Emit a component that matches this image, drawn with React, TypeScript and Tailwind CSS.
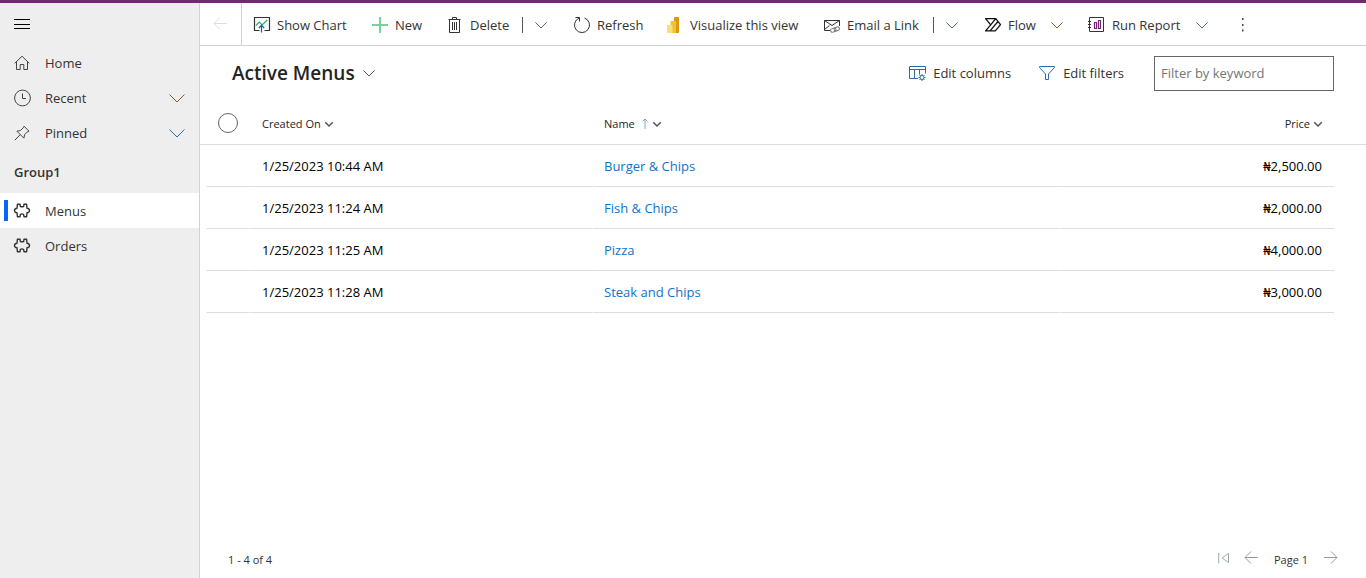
import type { ReactNode } from "react";

type IconProps = { children: ReactNode; className?: string; color?: string; width?: number };

function Icon({ children, className = "size-4", color = "#333333", width = 1 }: IconProps) {
  return (
    <svg
      viewBox="0 0 16 16"
      className={`shrink-0 overflow-visible ${className}`}
      fill="none"
      stroke={color}
      strokeWidth={width}
      aria-hidden="true"
    >
      {children}
    </svg>
  );
}

function Chevron({ className = "size-3", color = "#555555", width = 1 }: { className?: string; color?: string; width?: number }) {
  return (
    <Icon className={className} color={color} width={width}>
      <path d="M0.5 4.5 8 12l7.5-7.5" vectorEffect="non-scaling-stroke" />
    </Icon>
  );
}

function ArrowLeft({ color }: { color: string }) {
  return (
    <Icon className="size-4" color={color}>
      <path d="M14 7.500H1M7 1.500l-6 6 6 6" />
    </Icon>
  );
}

const HomeIcon = () => (
  <Icon color="#444444">
    <path d="M.7 8.3 8 1.2l7.3 7.1M2.5 7v7.5h3.7v-5h3.6v5h3.7V7" />
  </Icon>
);

const RecentIcon = () => (
  <Icon className="size-4" color="#444444">
    <circle cx="8.500" cy="8" r="7.900" />
    <path d="M8.500 3.500v5H12" />
  </Icon>
);

const PinIcon = () => (
  <Icon color="#444444">
    <path d="M10 1.2 15 6.2 13.4 6.8 10.6 9.6 9.9 13.2 2.9 6.2 6.5 5.5 9.4 2.6ZM6.2 9.7.8 15.2" />
  </Icon>
);

const PuzzleIcon = () => (
  <Icon color="#333333" width={1.400}>
    <path
      strokeLinejoin="round"
      d="M3.400 1.200H6L6.300 3.300Q8 4.300 9.700 3.300L10 1.200h2.600l.4 4q2.500.2 2.500 2.300T13 9.800l-.4 3.900H10l-.4-2.200Q8 10.300 6.400 11.500L6 13.700H3.400L3 9.800Q.5 9.600.5 7.500T3 5.200Z"
    />
  </Icon>
);

const ShowChartIcon = () => (
  <Icon width={1.200}>
    <path d="M5.500 13.500H.5v-13h15v13h-5" />
    <path stroke="#2fae5a" d="m2 8.500 3.200-3.500 3 3 5-5" />
    <path stroke="#1160b7" width="2" d="M7.500 15.500V8.500M4.800 11l2.700-2.700 2.700 2.700" />
  </Icon>
);

const PlusIcon = () => (
  <Icon color="#7fcf9b" width={2}>
    <path d="M8 0v16M0 8h16" />
  </Icon>
);

const TrashIcon = () => (
  <Icon>
    <path d="M1.500 2.500h12M5.500 2.500v-2h4v2M2.500 2.500v13h10v-13M5.500 5v8M7.500 5v8M9.500 5v8" />
  </Icon>
);

const RefreshIcon = () => (
  <Icon>
    <path d="M5.200 1.100A7.500 7.500 0 1 0 10.500 1M1.500.5h4v4" />
  </Icon>
);

const PowerBiIcon = () => (
  <Icon color="none">
    <rect x="7" y="0" width="5" height="16" rx=".7" fill="#d99a12" />
    <rect x="3.500" y="4" width="5.500" height="12" rx=".7" fill="#efc334" />
    <rect x="0" y="8" width="5.500" height="8" rx=".7" fill="#f7df7a" />
  </Icon>
);

const EmailIcon = () => (
  <Icon>
    <path d="M6 13.500H.5v-10h15V9M.5 3.500 8 8.500l7.500-5M.5 12.500l5-4" />
    <g stroke="#777777">
      <rect x="6.500" y="11.500" width="5.500" height="3.500" rx="1.700" transform="rotate(-20 9 13)" />
      <rect x="10" y="10.300" width="5.500" height="3.500" rx="1.700" transform="rotate(-20 12.500 12)" />
    </g>
  </Icon>
);

const FlowIcon = () => (
  <Icon color="#111111" width={1.300}>
    <path strokeLinejoin="round" d="M.6 1.600h10.200l4.700 6-5.200 6.300H.6L5.700 7.800ZM5.700 7.800l4.800-6M5 13.800 13 4.500" />
  </Icon>
);

const ReportIcon = () => (
  <Icon>
    <path d="M.5.5h14v14h-14Z" />
    <path d="M-1 4.500h3M-1 7.500h3M-1 10.500h3" />
    <path stroke="#742774" strokeWidth="1.200" d="M5.500 5.500h2v6h-2ZM9.500 3.500h2v8h-2Z" />
  </Icon>
);

const ColumnsIcon = () => (
  <Icon color="#2b6cab">
    <path d="M9 13.500H.5v-12h16v7M.5 4.500h16M5.500 4.500v9M10.500 4.500v5" />
    <circle cx="13" cy="12.500" r="2" />
    <path d="M13 9v1.500M13 14.500V16M9.500 12.500H11M15 12.500h1.500M10.500 10l1 1M14.500 14l1 1M15.500 10l-1 1M11.500 14l-1 1" />
  </Icon>
);

const FilterIcon = () => (
  <Icon color="#2b6cab">
    <path d="M.5 1.500h15v1L9.500 9v5.500h-3V9L.5 2.500Z" />
  </Icon>
);

const navItems = [
  { label: "Home", icon: <HomeIcon /> },
  { label: "Recent", icon: <RecentIcon />, chevron: "#8a5a1e" },
  { label: "Pinned", icon: <PinIcon />, chevron: "#2f6f9f" },
];

const groupItems = [
  { label: "Menus", active: true },
  { label: "Orders", active: false },
];

const commands = [
  { label: "Show Chart", icon: <ShowChartIcon />, width: "w-[118px]" },
  { label: "New", icon: <PlusIcon />, width: "w-[75px]" },
  { label: "Delete", icon: <TrashIcon />, width: "w-[69px]", split: true, menu: "w-[52px]", tone: "#6b5a6b" },
  { label: "Refresh", icon: <RefreshIcon />, width: "w-[93px]" },
  { label: "Visualize this view", icon: <PowerBiIcon />, width: "w-[157px]" },
  { label: "Email a Link", icon: <EmailIcon />, width: "w-[103px]", split: true, menu: "w-[52px]", tone: "#3f6f6a" },
  { label: "Flow", icon: <FlowIcon />, width: "w-[54px]", menu: "w-[50px]", tone: "#8a5a1e" },
  { label: "Run Report", icon: <ReportIcon />, width: "w-[95px]", menu: "w-[51px]", tone: "#4f7a5f" },
];

const rows = [
  { created: "1/25/2023 10:44 AM", name: "Burger & Chips", price: "₦2,500.00" },
  { created: "1/25/2023 11:24 AM", name: "Fish & Chips", price: "₦2,000.00" },
  { created: "1/25/2023 11:25 AM", name: "Pizza", price: "₦4,000.00" },
  { created: "1/25/2023 11:28 AM", name: "Steak and Chips", price: "₦3,000.00" },
];

function Sidebar() {
  return (
    <nav className="flex w-[200px] shrink-0 flex-col border-r border-[#d2d2d2] bg-[#eeeeee]">
      <button type="button" aria-label="Site map" className="flex h-[42px] items-center px-3.5">
        <Icon color="#000000">
          <path d="M0 3.500h16M0 8.500h16M0 12.500h16" />
        </Icon>
      </button>
      {navItems.map((item) => (
        <button key={item.label} type="button" className="flex h-[35px] items-center gap-[15px] px-3.5 text-left">
          {item.icon}
          <span className="grow">{item.label}</span>
          {item.chevron && <Chevron className="size-4" color={item.chevron} />}
        </button>
      ))}
      <h2 className="flex h-[43px] items-center px-3.5 font-semibold">Group1</h2>
      {groupItems.map((item) => (
        <a
          key={item.label}
          href="#"
          aria-current={item.active ? "page" : undefined}
          className={`flex h-[35px] items-center ${item.active ? "bg-white" : ""}`}
        >
          <span className={`ml-1 mr-1.5 h-[21px] w-1 ${item.active ? "bg-[#0a63ff]" : ""}`} />
          <PuzzleIcon />
          <span className="ml-[15px]">{item.label}</span>
        </a>
      ))}
    </nav>
  );
}

function CommandBar() {
  return (
    <div className="flex h-[43px] shrink-0 items-stretch border-b border-[#d2d2d2]">
      <button type="button" aria-label="Back" className="flex w-[42px] items-center justify-center border-r border-[#d2d2d2]">
        <ArrowLeft color="#dddddd" />
      </button>
      <div className="flex items-center pl-3 pt-px">
        {commands.map((c) => (
          <div key={c.label} className="flex items-center">
            <button type="button" className={`flex items-center gap-[7px] whitespace-nowrap ${c.width}`}>
              {c.icon}
              {c.label}
            </button>
            {c.menu && (
              <button
                type="button"
                aria-label={`${c.label} options`}
                className={`flex h-4 items-center pl-3 ${c.menu} ${c.split ? "ml-1.5 border-l border-[#555555]" : ""}`}
              >
                <Chevron color={c.tone} />
              </button>
            )}
          </div>
        ))}
        <button type="button" aria-label="More commands" className="flex w-4 justify-center">
          <Icon color="none">
            <path fill="#444444" d="M7 1h1.500v2H7ZM7 7h1.500v2H7ZM7 12.500h1.500v2H7Z" />
          </Icon>
        </button>
      </div>
    </div>
  );
}

function HeaderButton({ label, sorted = false }: { label: string; sorted?: boolean }) {
  return (
    <button type="button" className="inline-flex items-center gap-1 whitespace-nowrap align-middle">
      {label}
      {sorted && (
        <Icon className="ml-0.5 h-3 w-2" color="#3f7fae" width={1.300}>
          <path d="M8 18V-2M3 3 8-2l5 5" />
        </Icon>
      )}
      <Chevron className="size-2" color="#555555" width={1.500} />
    </button>
  );
}

function MenusTable() {
  const cell = "h-[42px] border-b border-l border-b-[#dddddd] border-l-white p-0";
  const head = "h-[43px] border-b border-[#dddddd] p-0 text-[11px] font-medium";
  return (
    <table className="w-full table-fixed border-separate border-spacing-0 text-black">
      <colgroup>
        <col className="w-[6px]" />
        <col className="w-[43px]" />
        <col className="w-[343px]" />
        <col />
        <col className="w-[275px]" />
        <col className="w-8" />
      </colgroup>
      <thead>
        <tr className="text-left text-[#242424]">
          <td className={head} />
          <th className={head}>
            <input
              type="checkbox"
              aria-label="Select all rows"
              className="ml-3 block size-5 appearance-none rounded-full border border-[#666666]"
            />
          </th>
          <th className={`${head} pl-[13px]`}>
            <HeaderButton label="Created On" />
          </th>
          <th className={`${head} pl-3`}>
            <HeaderButton label="Name" sorted />
          </th>
          <th className={`${head} pr-3 text-right`}>
            <HeaderButton label="Price" />
          </th>
          <td className={head} />
        </tr>
      </thead>
      <tbody>
        {rows.map((r) => (
          <tr key={r.name}>
            <td />
            <td className={cell} />
            <td className={`${cell} pl-3`}>{r.created}</td>
            <td className={`${cell} pl-[11px]`}>
              <a href="#" className="text-[#0f73c9]">
                {r.name}
              </a>
            </td>
            <td className={`${cell} pr-3 text-right`}>{r.price}</td>
            <td />
          </tr>
        ))}
      </tbody>
    </table>
  );
}

export default function App() {
  return (
    <div className="flex min-h-screen flex-col border-t-[3px] border-[#742774] bg-white font-['Open_Sans','Noto_Sans',sans-serif] text-[13px] leading-5 text-[#333333]">
      <div className="flex grow">
        <Sidebar />
        <main className="flex min-w-0 grow flex-col">
          <CommandBar />
          <header className="flex h-14 shrink-0 items-center px-8 pb-0.5">
            <h1 className="text-[19px] font-semibold text-[#242424]">
              <button type="button" className="flex items-center gap-2">
                Active Menus
                <Chevron />
              </button>
            </h1>
            <div className="ml-auto flex items-center">
              <button type="button" className="mr-7 flex items-center gap-2">
                <ColumnsIcon />
                Edit columns
              </button>
              <button type="button" className="mr-[30px] flex items-center gap-2">
                <FilterIcon />
                Edit filters
              </button>
              <input
                type="text"
                aria-label="Filter by keyword"
                placeholder="Filter by keyword"
                className="h-[35px] w-[180px] border border-[#666666] px-1.5 placeholder:text-[#757575]"
              />
            </div>
          </header>
          <MenusTable />
          <footer className="mt-auto flex h-9 shrink-0 items-center justify-between px-7 text-[11px]">
            <span>1 - 4 of 4</span>
            <div className="flex items-center gap-3.5 pb-1">
              <button type="button" aria-label="First page">
                <Icon className="size-3" color="#9aa5a5" width={1.300}>
                  <path d="M1 1v14M14 2v12L5.500 8Z" />
                </Icon>
              </button>
              <button type="button" aria-label="Previous page">
                <ArrowLeft color="#999999" />
              </button>
              <span className="pt-1">Page 1</span>
              <button type="button" aria-label="Next page">
                <Icon color="#999999">
                  <path d="M2 7.500h13M9 1.500l6 6-6 6" />
                </Icon>
              </button>
            </div>
          </footer>
        </main>
      </div>
    </div>
  );
}
